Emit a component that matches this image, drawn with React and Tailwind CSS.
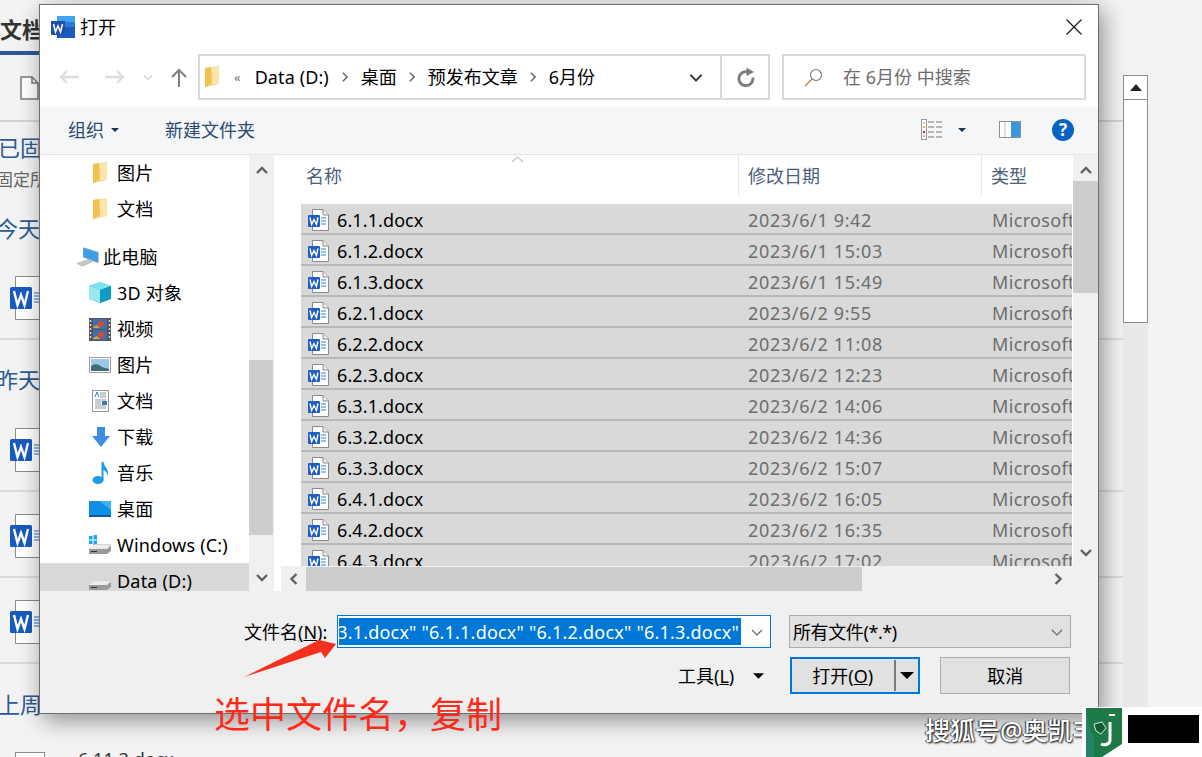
import React from 'react';

const FONT = "font-['Noto_Sans','Noto_Sans_CJK_SC',sans-serif]";

const FILES = [
  ['6.1.1.docx', '2023/6/1 9:42'],
  ['6.1.2.docx', '2023/6/1 15:03'],
  ['6.1.3.docx', '2023/6/1 15:49'],
  ['6.2.1.docx', '2023/6/2 9:55'],
  ['6.2.2.docx', '2023/6/2 11:08'],
  ['6.2.3.docx', '2023/6/2 12:23'],
  ['6.3.1.docx', '2023/6/2 14:06'],
  ['6.3.2.docx', '2023/6/2 14:36'],
  ['6.3.3.docx', '2023/6/2 15:07'],
  ['6.4.1.docx', '2023/6/2 16:05'],
  ['6.4.2.docx', '2023/6/2 16:35'],
  ['6.4.3.docx', '2023/6/2 17:02'],
];

// small .docx icon used in the file list
const DocxIcon = () => (
  <svg width="21" height="22" viewBox="0 0 21 22" className="shrink-0">
    <path d="M4.5 .5H15L20.5 6V21.5H4.5Z" fill="#fff" stroke="#8a8a8a" />
    <path d="M15 .5V6H20.5" fill="#eee" stroke="#8a8a8a" />
    <path d="M13 9h5M13 12h5M13 15h5" stroke="#2f7fd6" strokeWidth="1.2" />
    <rect x="0" y="6" width="12" height="12" rx="1" fill="#1f5fc4" />
    <path d="M2 8.5l1.6 7 2.4-5 2.4 5 1.6-7" fill="none" stroke="#fff" strokeWidth="1.4" />
  </svg>
);

// large Word page peeking out from behind the dialog
const BgWordIcon = () => (
  <svg width="30" height="44" viewBox="0 0 30 44" className="ml-[10px]">
    <path d="M5.5 .5H29.5V43.5H5.5Z" fill="#fff" stroke="#8a8a8a" />
    <rect x="0" y="11" width="22" height="22" rx="1.5" fill="#185abd" />
    <path d="M4 15l3.5 14 3.5-10 3.5 10L18 15" fill="none" stroke="#fff" strokeWidth="2.4" />
    <path d="M24 17h6M24 20h6M24 23h6M24 26h6" stroke="#2b6fc9" strokeWidth="1.1" />
  </svg>
);

const FolderIcon = ({ size = 'w-[15px] h-[22px]' }) => (
  <svg viewBox="0 0 15 22" className={size}>
    <path d="M0 2 14 0V18L2 21H0Z" fill="#f8dd8f" />
    <path d="M0 2 6 1 7 17 1 21H0Z" fill="#f2c14e" />
    <path d="M7 2 14 1V18H7Z" fill="#fbe7ac" />
  </svg>
);

const PcIcon = () => (
  <svg width="24" height="22" viewBox="0 0 24 22">
    <path d="M7 1 23 6V17L7 11Z" fill="#3aa0e8" stroke="#7f98ad" />
    <path d="M0 18 12 14 17 16 6 21Z" fill="#c9c9c9" stroke="#a5a5a5" strokeWidth=".6" />
  </svg>
);

const CubeIcon = () => (
  <svg width="22" height="22" viewBox="0 0 22 22">
    <path d="M11 0 22 4V17L11 21 0 17V4Z" fill="#2cb7d8" />
    <path d="M0 4 11 8 22 4 11 0Z" fill="#7fe3ee" />
    <path d="M0 4 11 8V21L0 17Z" fill="#9be8ef" />
    <path d="M11 8 22 4V17L11 21Z" fill="#0f9cc4" />
  </svg>
);

const FilmIcon = () => (
  <svg width="22" height="23" viewBox="0 0 22 23">
    <rect width="22" height="23" fill="#555" />
    <rect x="4" y="1" width="14" height="10" fill="#3f6fb0" />
    <rect x="4" y="12" width="14" height="10" fill="#3f6fb0" />
    <circle cx="12" cy="6" r="3" fill="#d84a2a" />
    <circle cx="12" cy="17" r="3" fill="#d84a2a" />
    <path d="M4 9l4-2 3 3H4ZM4 20l4-2 3 3H4Z" fill="#e0a030" />
    <path d="M1.500 2v19M20.500 2v19" stroke="#ddd" strokeWidth="1.4" strokeDasharray="2 2" />
  </svg>
);

const PictureIcon = () => (
  <svg width="22" height="16" viewBox="0 0 22 16">
    <rect x=".5" y=".5" width="21" height="15" fill="#fff" stroke="#9a9a9a" />
    <rect x="2" y="2" width="18" height="12" fill="#9cc7e6" />
    <path d="M2 9c4-3 8-2 11 1l7 2v2H2Z" fill="#3f6f74" />
  </svg>
);

const DocsIcon = () => (
  <svg width="18" height="22" viewBox="0 0 18 22" className="ml-[2px]">
    <rect x=".5" y=".5" width="16" height="21" fill="#fff" stroke="#999" />
    <path d="M3 7 5 2 7 7" fill="none" stroke="#2f7fd6" />
    <path d="M8 3h6M8 5h6M8 7h6M3 10h11M3 12h6M3 14h6M3 16h11M3 18h11" stroke="#8f9aa5" />
    <rect x="10" y="11" width="5" height="4" fill="#3f7f9f" />
  </svg>
);

const DownloadIcon = () => (
  <svg width="18" height="20" viewBox="0 0 18 20" className="ml-[2px]">
    <path d="M5 0H13V9H18L9 20 0 9H5Z" fill="#3d8ee0" />
  </svg>
);

const MusicIcon = () => (
  <svg width="18" height="23" viewBox="0 0 18 23" className="ml-[2px]">
    <ellipse cx="6" cy="18" rx="5.500" ry="4" fill="#1e9be8" />
    <path d="M9.500 18V0H11.500C12 5 17 6 16 14 15 10 13 8.500 11.500 8V18Z" fill="#1e9be8" />
  </svg>
);

const DesktopIcon = () => (
  <svg width="22" height="16" viewBox="0 0 22 16">
    <rect width="22" height="16" fill="#0f8fe6" />
    <path d="M10 0h12v9Z" fill="#3fb0f2" />
    <path d="M0 14h22v2H0Z" fill="#0a5c9c" />
  </svg>
);

const DriveIcon = ({ windows }) => (
  <svg width="22" height="20" viewBox="0 0 22 20">
    {windows && <path d="M0 1h3.500v3.500H0ZM4.500 0H8v4.500H4.500ZM0 5.500h3.500V9H0ZM4.500 5.500H8V10H4.500Z" fill="#19a5f0" />}
    <path d="M0 14 6 9H22V16L18 19H0Z" fill="#d4d4d4" />
    <path d="M0 14H18L22 11V16L18 19H0Z" fill="#9a9a9a" />
    <path d="M0 14 5 10H21L18 14Z" fill="#ececec" />
    <path d="M2 16h6v1H2Z" fill="#333" />
  </svg>
);

const NavRow = ({ icon, label, top, selected }) => (
  <div className={`flex h-9 items-center ${top ? 'pl-[37px] gap-[4px]' : 'pl-[49px] gap-[6px]'} ${selected ? 'bg-[#d9d9d9]' : ''}`}>
    <span className="flex w-[22px] justify-center">{icon}</span>
    <span className="whitespace-nowrap tracking-[0.2px]">{label}</span>
  </div>
);

const Chevron = ({ dir = 'up', color = '#606060', size = 14, sw = 2.4 }) => {
  const d = {
    up: 'M2 10 7 5l5 5',
    down: 'M2 5l5 5 5-5',
    left: 'M9.500 2 4.500 7l5 5',
    right: 'M4.500 2l5 5-5 5',
  }[dir];
  return (
    <svg width={size} height={size} viewBox="0 0 14 14">
      <path d={d} fill="none" stroke={color} strokeWidth={sw} />
    </svg>
  );
};

const Caret = ({ color = '#000', w = 10, h = 5 }) => (
  <svg width={w} height={h} viewBox="0 0 10 5">
    <path d="M0 0h10L5 5Z" fill={color} />
  </svg>
);

const Sep = () => <Chevron dir="right" color="#666" size={12} sw={1.800} />;

export default function App() {
  return (
    <div className={`relative h-[757px] w-[1202px] overflow-hidden bg-[#f3f3f3] ${FONT}`}>
      {/* Word backstage behind the dialog */}
      <div className="flex h-full">
        <div className="w-[1123px] shrink-0">
          <div className="h-[55px] w-[60px] border-b-4 border-[#2b579a]">
            <div className="pt-[14px] text-[22px] font-bold leading-[30px] text-[#333]">文档</div>
          </div>
          <div className="flex h-[67px] items-center border-b-2 border-[#d4d4d4] pl-[20px]">
            <svg width="19" height="24" viewBox="0 0 19 24">
              <path d="M1 1H12L18 7V23H1Z" fill="#fff" stroke="#7a7a7a" strokeWidth="1.500" />
              <path d="M12 1V7H18" fill="none" stroke="#7a7a7a" strokeWidth="1.500" />
            </svg>
          </div>
          <div className="ml-[-2px] mt-[9px] w-[80px] text-[22px] leading-8 text-[#2b5a94]">已固定</div>
          <div className="ml-[-4px] mt-[5px] w-[80px] text-[17px] leading-6 text-[#666]">固定所</div>
          <div className="ml-[-4px] mt-[20px] w-[80px] text-[22px] leading-8 text-[#2b5a94]">今天</div>
          <div className="flex h-[96px] flex-col border-b-2 border-[#dadada] pt-[32px]">
            <BgWordIcon />
          </div>
          <div className="ml-[-4px] mt-[23px] w-[80px] text-[22px] leading-8 text-[#2b5a94]">昨天</div>
          <div className="flex h-[97px] flex-col border-b-2 border-[#dadada] pt-[33px]">
            <BgWordIcon />
          </div>
          <div className="flex h-[86px] flex-col border-b-2 border-[#dadada] pt-[22px]">
            <BgWordIcon />
          </div>
          <div className="flex h-[86px] flex-col border-b-2 border-[#dadada] pt-[22px]">
            <BgWordIcon />
          </div>
          <div className="ml-[-2px] mt-[24px] w-[80px] text-[22px] leading-8 text-[#2b5a94]">上周</div>
          <div className="mt-[27px] flex items-start pl-[15px]">
            <div className="mt-[5px] h-[30px] w-[30px] border border-[#8a8a8a] bg-white" />
            <span className="ml-[33px] text-[18px] leading-6 text-[#333]">6.11.3.docx</span>
          </div>
        </div>

        <div className="mt-[75px] flex h-[682px] w-[25px] shrink-0 flex-col">
          <div className="flex h-[25px] items-center justify-center border border-[#8f8f8f] bg-white">
            <svg width="12" height="7" viewBox="0 0 12 7"><path d="M0 7h12L6 0Z" fill="#222" /></svg>
          </div>
          <div className="h-[223px] border border-t-0 border-[#8f8f8f] bg-white" />
          <div className="flex-1 bg-[#e9e9e9]" />
        </div>
      </div>

      {/* Open file dialog */}
      <div className="absolute left-[39px] top-[4px] flex h-[710px] w-[1060px] flex-col border border-[#6f6f6f] bg-white text-[18px] leading-6 text-black shadow-[4px_6px_22px_rgba(0,0,0,0.42)]">
        {/* title bar */}
        <div className="flex h-[49px] shrink-0 items-center pb-[5px] pl-[11px] pr-[16px]">
          <svg width="24" height="23" viewBox="0 0 24 23">
            <rect x="6" y="0" width="18" height="22" fill="#185abd" />
            <rect x="6" y="0" width="18" height="6" fill="#41a5ee" />
            <rect x="6" y="6" width="18" height="5" fill="#2b7cd3" />
            <rect x="0" y="5" width="14" height="14" fill="#1d4fb0" />
            <path d="M2.500 8l2 8 2.500-6 2.500 6 2-8" fill="none" stroke="#fff" strokeWidth="1.500" />
          </svg>
          <span className="ml-[5px]">打开</span>
          <svg width="16" height="16" viewBox="0 0 16 16" className="ml-auto">
            <path d="M.5.5l15 15M15.500.5l-15 15" stroke="#111" strokeWidth="1.100" />
          </svg>
        </div>

        {/* address row */}
        <div className="flex h-[53px] shrink-0 items-start">
          <div className="flex h-[46px] w-[158px] shrink-0 items-center pl-[19px]">
            <svg width="20" height="14" viewBox="0 0 20 14">
              <path d="M20 7H2M8 1 2 7l6 6" fill="none" stroke="#dcdcdc" strokeWidth="2.400" />
            </svg>
            <svg width="20" height="14" viewBox="0 0 20 14" className="ml-[26px]">
              <path d="M0 7h18M12 1l6 6-6 6" fill="none" stroke="#dcdcdc" strokeWidth="2.400" />
            </svg>
            <span className="ml-[17px]"><Chevron dir="down" color="#dcdcdc" size={12} sw={2} /></span>
            <svg width="16" height="19" viewBox="0 0 16 19" className="ml-[17px]">
              <path d="M8 19V2M1 9l7-7 7 7" fill="none" stroke="#808080" strokeWidth="2" />
            </svg>
          </div>
          <div className="flex h-[46px] w-[572px] shrink-0 items-center border-2 border-[#dadada] pl-[5px]">
            <FolderIcon />
            <span className="ml-[14px] text-[13px] text-[#777]">«</span>
            <span className="ml-[14px] whitespace-nowrap tracking-[0.1px]">Data (D:)</span>
            <span className="ml-[10px]"><Sep /></span>
            <span className="ml-[10px]">桌面</span>
            <span className="ml-[9px]"><Sep /></span>
            <span className="ml-[10px]">预发布文章</span>
            <span className="ml-[9px]"><Sep /></span>
            <span className="ml-[10px]">6月份</span>
            <span className="ml-auto mr-[16px]"><Chevron dir="down" color="#444" size={16} sw={1.800} /></span>
            <div className="flex h-full w-[48px] items-center justify-center border-l-2 border-[#dadada] pl-[2px]">
              <svg width="20" height="20" viewBox="0 0 20 20">
                <path d="M16.800 10.500A7 7 0 1 1 12 5" fill="none" stroke="#7c7c7c" strokeWidth="2.800" />
                <path d="M10.500 .5 18 5 10.500 9Z" fill="#7c7c7c" />
              </svg>
            </div>
          </div>
          <div className="ml-[12px] flex h-[46px] w-[304px] shrink-0 items-center border-2 border-[#dadada] pl-[20px] text-[#6d6d6d]">
            <svg width="19" height="19" viewBox="0 0 19 19">
              <circle cx="12" cy="7" r="5.500" fill="none" stroke="#777" strokeWidth="1.200" />
              <path d="M8 11 1 18" stroke="#b8864d" strokeWidth="1.400" />
            </svg>
            <span className="ml-[20px] whitespace-nowrap">在 6月份 中搜索</span>
          </div>
        </div>

        {/* toolbar */}
        <div className="flex h-[48px] shrink-0 items-center border-b border-[#e6e6e6] bg-[#f5f6f7] pb-[2px] pl-[28px] text-[#2a4a70]">
          <span>组织</span>
          <span className="ml-[7px]"><Caret color="#1c3557" w={8} h={4} /></span>
          <span className="ml-[46px]">新建文件夹</span>
          <svg width="22" height="21" viewBox="0 0 22 21" className="ml-auto">
            <rect x=".5" y=".5" width="5" height="20" fill="#fff" stroke="#999" />
            <path d="M2 3h2v2H2Z" fill="#ccc" /><path d="M2 7h2v2H2Z" fill="#e0b040" /><path d="M2 12h2v2H2Z" fill="#b03a2a" /><path d="M2 16h2v2H2Z" fill="#bbb" />
            <path d="M7 3h6M15 3h6M7 8h6M15 8h6M7 13h6M15 13h6M7 18h6M15 18h6" stroke="#777" />
          </svg>
          <span className="ml-[15px]"><Caret color="#1c3557" w={8} h={4} /></span>
          <svg width="22" height="17" viewBox="0 0 22 17" className="ml-[33px]">
            <rect x=".5" y=".5" width="21" height="16" fill="#fff" stroke="#8f8f8f" />
            <path d="M6 1v15" stroke="#bbb" />
            <rect x="12" y="1" width="9" height="15" fill="#3d94e0" />
          </svg>
          <span className="ml-[31px] mr-[24px] flex h-[22px] w-[22px] items-center justify-center rounded-full bg-[#0563c1] text-[17px] font-bold text-white">?</span>
        </div>

        {/* panes */}
        <div className="flex h-[436px] shrink-0">
          <div className="h-full w-[209px] shrink-0 overflow-hidden">
            <NavRow icon={<FolderIcon />} label="图片" />
            <NavRow icon={<FolderIcon />} label="文档" />
            <div className="h-3" />
            <NavRow top icon={<PcIcon />} label="此电脑" />
            <NavRow icon={<CubeIcon />} label="3D 对象" />
            <NavRow icon={<FilmIcon />} label="视频" />
            <NavRow icon={<PictureIcon />} label="图片" />
            <NavRow icon={<DocsIcon />} label="文档" />
            <NavRow icon={<DownloadIcon />} label="下载" />
            <NavRow icon={<MusicIcon />} label="音乐" />
            <NavRow icon={<DesktopIcon />} label="桌面" />
            <NavRow icon={<DriveIcon windows />} label="Windows (C:)" />
            <NavRow selected icon={<DriveIcon />} label="Data (D:)" />
          </div>

          <div className="flex h-full w-[25px] shrink-0 flex-col bg-[#f0f0f0]">
            <div className="flex h-[30px] items-center justify-center"><Chevron /></div>
            <div className="mt-[175px] h-[175px] w-[24px] bg-[#cdcdcd]" />
            <div className="flex flex-1 items-end justify-center pb-[7px]"><Chevron dir="down" /></div>
          </div>

          <div className="flex min-w-0 flex-1">
            <div className="flex w-[799px] shrink-0 flex-col pl-[3px]">
              <div className="relative flex h-[49px] shrink-0 text-[#4c607a]">
                <svg width="13" height="6" viewBox="0 0 13 6" className="absolute left-[234px] top-[1px]">
                  <path d="M1 6l5.500-5L12 6" fill="none" stroke="#a0a0a0" />
                </svg>
                <div className="h-[40px] w-[462px] shrink-0 border-r border-[#e5e5e5] pl-[29px] pt-[9px]">名称</div>
                <div className="h-[40px] w-[243px] shrink-0 border-r border-[#e5e5e5] pl-[9px] pt-[9px]">修改日期</div>
                <div className="pl-[9px] pt-[9px]">类型</div>
              </div>
              <div className="h-[362px] shrink-0 overflow-hidden pl-[24px] pr-[1px]">
                {FILES.map(([name, date]) => (
                  <div key={name} className="flex h-[31px] items-center overflow-hidden whitespace-nowrap border-b-2 border-[#b8b8b8] bg-[#d9d9d9] pt-[3px]">
                    <span className="ml-[7px] flex w-[29px] shrink-0"><DocxIcon /></span>
                    <span className="w-[411px] shrink-0 tracking-[0.1px]">{name}</span>
                    <span className="w-[244px] shrink-0 tracking-[0.65px] text-[#6d6d6d]">{date}</span>
                    <span className="tracking-[0.35px] text-[#6d6d6d]">Microsoft</span>
                  </div>
                ))}
              </div>
              <div className="flex h-[25px] shrink-0 pl-[4px]">
                <div className="flex w-[792px] items-center bg-[#f0f0f0] pr-[3px]">
                  <span className="flex w-[25px] justify-center"><Chevron dir="left" /></span>
                  <div className="h-[24px] w-[556px] bg-[#cdcdcd]" />
                  <span className="ml-auto flex w-[25px] justify-center"><Chevron dir="right" /></span>
                </div>
              </div>
            </div>
            <div className="flex h-full flex-1 flex-col bg-[#f0f0f0]">
              <div className="flex h-[26px] items-center justify-center pt-[3px]"><Chevron /></div>
              <div className="h-[112px] bg-[#cdcdcd]" />
              <div className="flex h-[271px] items-end justify-center pb-[5px]"><Chevron dir="down" /></div>
            </div>
          </div>
        </div>

        {/* footer */}
        <div className="relative flex h-[122px] shrink-0 flex-col bg-[#f0f0f0]">
          <div className="mt-[24px] flex h-[33px] items-center">
            <span className="ml-[204px] w-[93px] shrink-0 whitespace-nowrap">文件名(<u>N</u>):</span>
            <div className="flex h-[33px] w-[434px] shrink-0 items-center border border-[#0078d7] bg-white pl-[1px]">
              <div className="flex h-[27px] w-[402px] items-center justify-end overflow-hidden whitespace-nowrap bg-[#0078d7] pr-[2px] tracking-[0.2px] text-white">
                3.1.docx" "6.1.1.docx" "6.1.2.docx" "6.1.3.docx"
              </div>
              <span className="ml-auto mr-[6px]"><Chevron dir="down" color="#666" size={14} sw={1.200} /></span>
            </div>
            <div className="ml-[18px] flex h-[33px] w-[282px] shrink-0 items-center border border-[#adadad] bg-[#e1e1e1] pl-[3px] tracking-[-0.4px]">
              所有文件(*.*)
              <span className="ml-auto mr-[6px]"><Chevron dir="down" color="#666" size={14} sw={1.200} /></span>
            </div>
          </div>
          <div className="mt-[9px] flex h-[37px] items-center">
            <span className="ml-[638px] whitespace-nowrap">工具(<u>L</u>)</span>
            <span className="ml-[19px]"><Caret w={11} h={6} /></span>
            <div className="ml-[26px] flex h-[37px] w-[130px] shrink-0 items-center border-2 border-[#0078d7] bg-[#e1e1e1]">
              <span className="ml-[20px] whitespace-nowrap">打开(<u>O</u>)</span>
              <div className="ml-auto h-[31px] w-[2px] bg-[#7a7a7a]" />
              <span className="mx-[4px]"><Caret w={14} h={7} /></span>
            </div>
            <div className="ml-[20px] flex h-[37px] w-[130px] shrink-0 items-center justify-center border border-[#adadad] bg-[#e1e1e1]">取消</div>
          </div>
        </div>
      </div>

      {/* red annotation on top of the screenshot */}
      <svg width="100" height="45" viewBox="0 0 100 45" className="absolute left-[240px] top-[637px]">
        <path d="M4 40 79 3 96 7 85 21 81 15Z" fill="#f5301e" />
      </svg>
      <div className="absolute left-[214px] top-[690px] whitespace-nowrap text-[36px] leading-[50px] text-[#ff2a1a]">选中文件名，复制</div>

      {/* watermark */}
      <div className="absolute left-[925px] top-[714px] whitespace-nowrap text-[25px] font-medium leading-8 text-white [text-shadow:1px_1px_2px_#000,-1px_0_1px_#333]">搜狐号@奥凯丰</div>
      <div className="absolute left-[1082px] top-[707px] flex h-[50px] w-[120px] items-start bg-white pl-[4px] pt-[1px]">
        <svg width="36" height="49" viewBox="0 0 36 49">
          <path d="M0 0H36V36L16 49H0Z" fill="#1d7a46" />
          <path d="M0 0V49H8V28L5 24Z" fill="#2a8a8a" opacity=".5" />
          <path d="M23 6h6v2h-6Z" fill="#fff" />
          <path d="M24 14v18c0 4-5 6-9 4" fill="none" stroke="#fff" strokeWidth="3" />
          <path d="M8 16l8-2 4 6-5 6-5-3Z" fill="#0f5c33" stroke="#d9e8df" />
        </svg>
        <div className="ml-[6px] mt-[7px] h-[28px] w-[71px] bg-black" />
      </div>
    </div>
  );
}
